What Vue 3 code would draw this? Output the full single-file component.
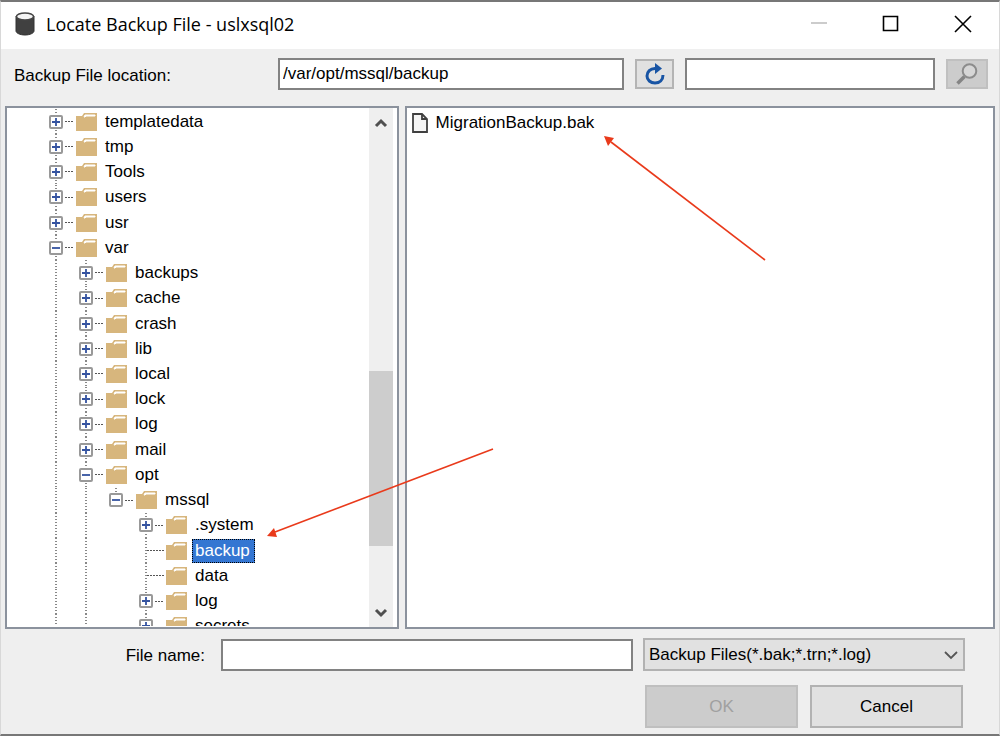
<template>
  <div class="window">
    <header class="titlebar">
      <svg class="app-icon" width="20" height="24" viewBox="0 0 20 24">
        <path d="M1 4v15c0 2 4 4 9 4s9-2 9-4V4z" fill="#404040" stroke="#333" />
        <ellipse cx="10" cy="4.500" rx="8.500" ry="3.500" fill="#f4f4f4" stroke="#444" stroke-width="1.500" />
      </svg>
      <h1>Locate Backup File - uslxsql02</h1>
      <button class="win-button" aria-label="Minimize" disabled>
        <svg width="18" height="18" viewBox="0 0 18 18"><path d="M1 8h16" stroke="#ccc" stroke-width="2" /></svg>
      </button>
      <button class="win-button" aria-label="Maximize">
        <svg width="18" height="18" viewBox="0 0 18 18"><path d="M1.500 1.500h14v14h-14z" fill="none" stroke="#000" stroke-width="1.600" /></svg>
      </button>
      <button class="win-button" aria-label="Close">
        <svg width="18" height="18" viewBox="0 0 18 18"><path d="M1 1l16 16M17 1L1 17" stroke="#000" stroke-width="1.600" /></svg>
      </button>
    </header>

    <div class="toolbar">
      <label for="location">Backup File location:</label>
      <input id="location" v-model="location" class="location" type="text" />
      <button class="tool refresh" aria-label="Refresh">
        <svg width="22" height="22" viewBox="0 0 22 22">
          <path d="M12 5.500C6 5 3 9 3 13c0 4 3.500 7 8 7s8-3 8-8" fill="none" stroke="#1854a4" stroke-width="3" />
          <path d="M11 0l7 5.500-7 5.500z" fill="#1854a4" />
        </svg>
      </button>
      <input v-model="search" class="search" type="text" aria-label="Search" />
      <button class="tool find" aria-label="Find" disabled>
        <svg width="24" height="24" viewBox="0 0 24 24">
          <path d="M9.500 14.500l-7 7" stroke="#858585" stroke-width="3.500" />
          <circle cx="14.500" cy="9" r="6.800" fill="#d6d6d6" stroke="#8c8c8c" stroke-width="2" />
        </svg>
      </button>
    </div>

    <main class="panels">
      <section class="panel">
        <div class="tree-view">
          <ul class="tree" role="tree">
            <li v-for="(node, i) in nodes" :key="i" class="node" role="treeitem" :aria-selected="node.name === selected">
              <span v-for="n in node.level" :key="n" class="guide" :class="{ line: n < 3 }"></span>
              <span class="guide line branch" :class="{ last: node.last, leaf: !node.sign }">
                <button v-if="node.sign" class="toggle" :aria-label="node.sign === '+' ? 'Expand' : 'Collapse'">
                  <svg width="10" height="10" viewBox="0 0 10 10">
                    <path :d="node.sign === '+' ? 'M1 5h8M5 1v8' : 'M1 5h8'" stroke="#3453a0" stroke-width="1.800" />
                  </svg>
                </button>
              </span>
              <svg class="folder" width="22" height="20" viewBox="0 0 22 20">
                <path d="M0 4h6l2-3h13v18H0z" fill="#d7b67d" />
                <path d="M8 5l1-2h10v1l-9 0-1 1z" fill="#fff" stroke="#fff" />
              </svg>
              <span class="name" :class="{ selected: node.name === selected }" @click="selected = node.name">{{ node.name }}</span>
            </li>
          </ul>
        </div>
        <div class="scrollbar">
          <button class="scroll-button" aria-label="Scroll up">
            <svg width="14" height="12" viewBox="0 0 14 12"><path d="M2 8l5-5 5 5" fill="none" stroke="#505050" stroke-width="3" /></svg>
          </button>
          <div class="above"></div>
          <div class="thumb"></div>
          <div class="below"></div>
          <button class="scroll-button" aria-label="Scroll down">
            <svg width="14" height="12" viewBox="0 0 14 12"><path d="M2 4l5 5 5-5" fill="none" stroke="#505050" stroke-width="3" /></svg>
          </button>
        </div>
      </section>

      <section class="panel">
        <ul class="files">
          <li v-for="file in files" :key="file" class="file">
            <svg width="16" height="20" viewBox="0 0 16 20">
              <path d="M1 1h9l5 5v13H1z" fill="#f5f5f5" stroke="#404040" stroke-width="1.800" />
              <path d="M10 1v5h5" fill="none" stroke="#404040" stroke-width="1.800" />
            </svg>
            <span>{{ file }}</span>
          </li>
        </ul>
      </section>
    </main>

    <footer class="footer">
      <div class="name-row">
        <label for="filename">File name:</label>
        <input id="filename" v-model="fileName" class="filename" type="text" />
        <div class="select-box">
          <select v-model="filter" aria-label="File type">
            <option>Backup Files(*.bak;*.trn;*.log)</option>
          </select>
          <svg class="chevron" width="14" height="10" viewBox="0 0 14 10"><path d="M1 2l6 6 6-6" fill="none" stroke="#555" stroke-width="1.800" /></svg>
        </div>
      </div>
      <div class="actions">
        <button class="action" disabled>OK</button>
        <button class="action">Cancel</button>
      </div>
    </footer>

    <!-- red pointer arrows over the dialog -->
    <svg class="arrows" width="1000" height="736" viewBox="0 0 1000 736">
      <g stroke="#e93a1b" stroke-width="1.600">
        <path d="M765 260L611 142" />
        <path d="M493 449L275 532" />
      </g>
      <path d="M604 136l10 2-6 8z" fill="#e93a1b" />
      <path d="M267 536l7-8 3 9z" fill="#e93a1b" />
    </svg>
  </div>
</template>

<script setup>
import { ref } from 'vue';

const location = ref('/var/opt/mssql/backup');
const search = ref('');
const fileName = ref('');
const filter = ref('Backup Files(*.bak;*.trn;*.log)');
const selected = ref('backup');
const files = ref(['MigrationBackup.bak']);

const nodes = ref([
  { name: 'templatedata', level: 0, sign: '+' },
  { name: 'tmp', level: 0, sign: '+' },
  { name: 'Tools', level: 0, sign: '+' },
  { name: 'users', level: 0, sign: '+' },
  { name: 'usr', level: 0, sign: '+' },
  { name: 'var', level: 0, sign: '-' },
  { name: 'backups', level: 1, sign: '+' },
  { name: 'cache', level: 1, sign: '+' },
  { name: 'crash', level: 1, sign: '+' },
  { name: 'lib', level: 1, sign: '+' },
  { name: 'local', level: 1, sign: '+' },
  { name: 'lock', level: 1, sign: '+' },
  { name: 'log', level: 1, sign: '+' },
  { name: 'mail', level: 1, sign: '+' },
  { name: 'opt', level: 1, sign: '-' },
  { name: 'mssql', level: 2, sign: '-', last: true },
  { name: '.system', level: 3, sign: '+' },
  { name: 'backup', level: 3 },
  { name: 'data', level: 3 },
  { name: 'log', level: 3, sign: '+' },
  { name: 'secrets', level: 3, sign: '+' },
]);
</script>

<style>
body {
  margin: 0;
}
</style>

<style scoped>
.window {
  position: relative;
  display: flex;
  flex-direction: column;
  box-sizing: border-box;
  min-height: 100vh;
  overflow: hidden;
  border: 1px solid #d8d8d8;
  border-top: 2px solid #777;
  border-bottom: 2px solid #777;
  background: #efefef;
  color: #000;
  font-family: "Liberation Sans", Arial, sans-serif;
  font-size: 17px;
  line-height: 20px;
}

button,
input,
select {
  box-sizing: border-box;
  margin: 0;
  padding: 0;
  border-radius: 0;
  color: #000;
  font: inherit;
}

button {
  display: flex;
  align-items: center;
  justify-content: center;
}

ul {
  margin: 0;
  padding: 0;
  list-style: none;
}

svg {
  flex: none;
}

.titlebar {
  display: flex;
  align-items: center;
  box-sizing: border-box;
  height: 47px;
  padding: 0 0 3px 14px;
  background: #fff;
}

h1 {
  flex: 1;
  margin: 0 0 0 11px;
  font-family: "Open Sans", "Noto Sans", sans-serif;
  font-size: 18px;
  font-weight: 400;
  line-height: 24px;
}

.win-button {
  width: 72px;
  height: 44px;
  border: none;
  background: none;
}

.toolbar {
  display: flex;
  align-items: center;
  gap: 11px;
  box-sizing: border-box;
  height: 57px;
  padding: 0 11px 7px 13px;
}

.toolbar label {
  width: 253px;
  padding-top: 3px;
}

input {
  min-width: 0;
  height: 32px;
  padding: 0 3px;
  border: 2px solid #828282;
  background: #fff;
}

.location {
  flex: 7;
}

.search {
  flex: 5;
}

.tool {
  height: 30px;
  border: 2px solid #b4b4b4;
  background: #e1e1e1;
}

.refresh {
  width: 39px;
}

.find {
  width: 42px;
  border-color: #c0c0c0;
  background: #ccc;
}

.panels {
  display: grid;
  flex: 1;
  grid-template-columns: 2fr 3fr;
  gap: 6px;
  padding: 0 4px;
}

.panel {
  display: flex;
  min-width: 0;
  border: 2px solid #8b929d;
  background: #fff;
}

.tree-view {
  flex: 1;
  height: 518px;
  overflow: hidden;
}

/* 21 equal rows, the last one runs under the edge of the view */
.tree {
  display: grid;
  grid-auto-rows: 1fr;
  height: 530px;
  padding-top: 1px;
  padding-left: 34px;
}

.node {
  display: flex;
  align-items: center;
}

.guide {
  position: relative;
  display: flex;
  align-self: stretch;
  align-items: center;
  justify-content: center;
  width: 30px;
}

.line::before {
  content: "";
  position: absolute;
  top: 0;
  bottom: 0;
  left: 14px;
  width: 2px;
  background: repeating-linear-gradient(#888 0 1px, #fff 1px 3px);
}

.last::before {
  bottom: 50%;
}

.branch::after {
  content: "";
  position: absolute;
  top: 12px;
  right: -3px;
  width: 9px;
  height: 1px;
  background: repeating-linear-gradient(90deg, #555 0 2px, #fff 2px 3px);
}

.leaf::after {
  width: 17px;
}

.toggle {
  position: relative;
  width: 14px;
  height: 14px;
  border: 2px solid #999;
  border-radius: 2px;
  background: #fff;
}

.folder {
  margin-left: 5px;
}

.name {
  box-sizing: border-box;
  height: 24px;
  margin-left: 4px;
  padding: 0 4px 0 2px;
  border: 1px solid transparent;
  line-height: 22px;
}

.selected {
  border: 1px dotted #000;
  background: #3476d2;
  color: #fff;
}

.scrollbar {
  display: flex;
  flex-direction: column;
  width: 24px;
  margin-right: 4px;
  background: #efefef;
}

.scroll-button {
  height: 31px;
  border: none;
  background: none;
}

.above {
  flex: 232;
}

.thumb {
  flex: 175;
  background: #cdcdcd;
}

.below {
  flex: 50;
}

.files {
  padding: 4px 5px;
}

.file {
  display: flex;
  align-items: center;
  gap: 8px;
  height: 22px;
}

.footer {
  padding: 9px 34px 6px;
}

.name-row {
  display: flex;
  align-items: center;
  padding-left: 18px;
}

.name-row label {
  flex: none;
  box-sizing: border-box;
  width: 168px;
  padding: 3px 16px 0 0;
  text-align: right;
}

.filename {
  flex: 1;
}

.select-box {
  position: relative;
  flex: none;
  width: 322px;
  margin-left: 10px;
}

select {
  display: block;
  width: 100%;
  height: 33px;
  padding: 0 4px;
  border: 2px solid #b2b2b2;
  background: #e1e1e1;
  appearance: none;
}

.chevron {
  position: absolute;
  top: 12px;
  right: 7px;
  pointer-events: none;
}

.actions {
  display: flex;
  justify-content: flex-end;
  gap: 12px;
  padding: 14px 2px 0 0;
}

.action {
  width: 153px;
  height: 43px;
  border: 2px solid #b2b2b2;
  background: #e1e1e1;
}

.action:disabled {
  border-color: #bfbfbf;
  background: #ccc;
  color: #a0a0a0;
}

.arrows {
  position: absolute;
  top: -2px;
  left: -1px;
  pointer-events: none;
}
</style>
